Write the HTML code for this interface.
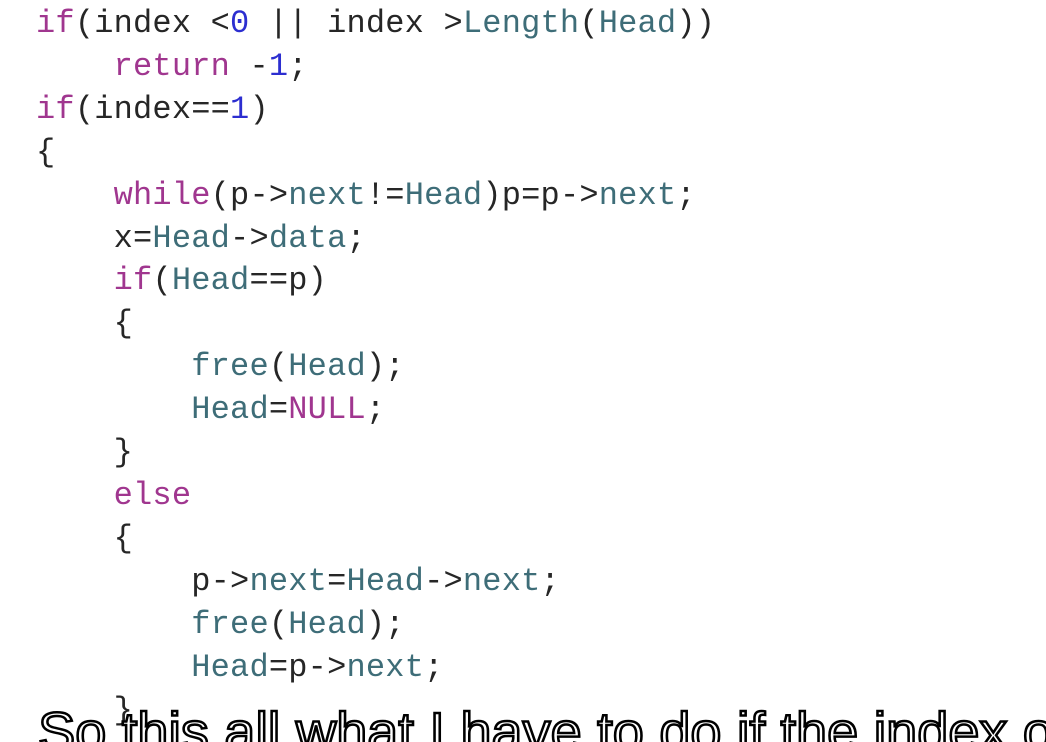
<!DOCTYPE html>
<html><head><meta charset="utf-8"><style>
html,body{margin:0;padding:0;background:#fff;width:1046px;height:742px;overflow:hidden;position:relative}
pre{position:absolute;left:36px;top:3px;margin:0;font-family:"Liberation Mono",monospace;font-size:32px;line-height:42.9px;color:#262626;letter-spacing:0.2px}
.k{color:#a0368f}.t{color:#3e6d78}.n{color:#2c2ed0}
.sub{position:absolute;left:38px;top:705px;line-height:54px;font-family:"Liberation Sans",sans-serif;font-size:54px;color:#fff;-webkit-text-stroke:2.5px #000;white-space:nowrap;letter-spacing:0px;transform:scaleX(1.035);transform-origin:left}
</style></head><body>
<pre><span class="k">if</span>(index &lt;<span class="n">0</span> || index &gt;<span class="t">Length</span>(<span class="t">Head</span>))
    <span class="k">return</span> -<span class="n">1</span>;
<span class="k">if</span>(index==<span class="n">1</span>)
{
    <span class="k">while</span>(p-&gt;<span class="t">next</span>!=<span class="t">Head</span>)p=p-&gt;<span class="t">next</span>;
    x=<span class="t">Head</span>-&gt;<span class="t">data</span>;
    <span class="k">if</span>(<span class="t">Head</span>==p)
    {
        <span class="t">free</span>(<span class="t">Head</span>);
        <span class="t">Head</span>=<span class="k">NULL</span>;
    }
    <span class="k">else</span>
    {
        p-&gt;<span class="t">next</span>=<span class="t">Head</span>-&gt;<span class="t">next</span>;
        <span class="t">free</span>(<span class="t">Head</span>);
        <span class="t">Head</span>=p-&gt;<span class="t">next</span>;
    }</pre>
<div class="sub">So this all what I have to do if the index o</div>
</body></html>
